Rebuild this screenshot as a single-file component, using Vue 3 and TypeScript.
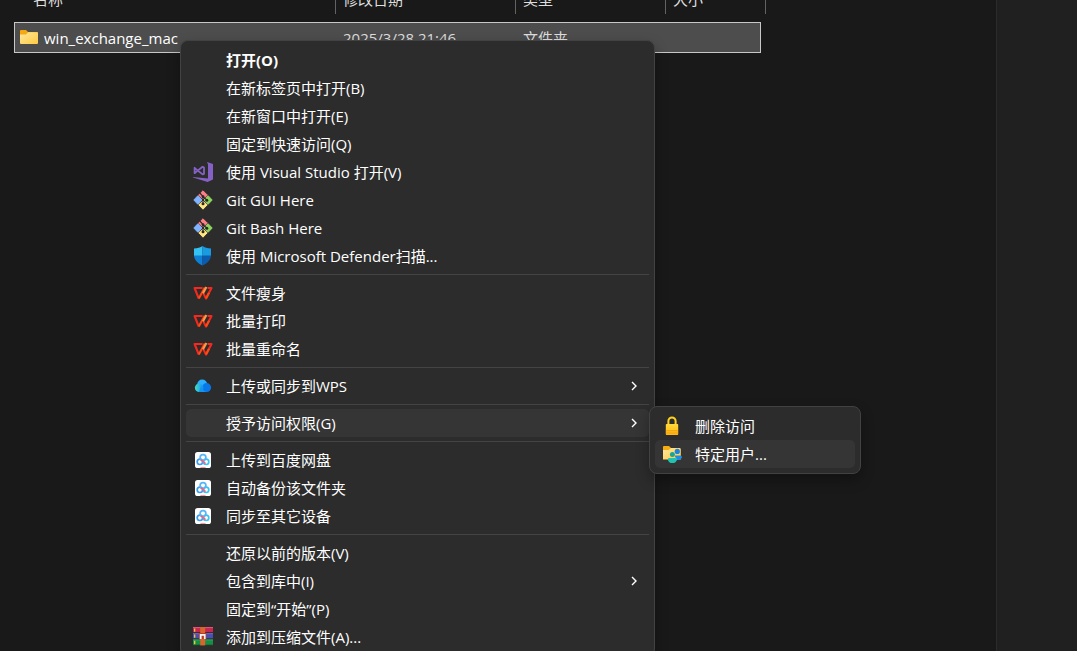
<script setup lang="ts">
import { ref } from 'vue'

type IconName =
  | 'vs' | 'git' | 'shield' | 'wps' | 'cloud' | 'baidu' | 'rar' | 'lock' | 'share'

interface MenuItem {
  label: string
  icon?: IconName
  bold?: boolean
  arrow?: boolean
  children?: MenuItem[]
}

const columns: string[] = ['名称', '修改日期', '类型', '大小']

const groups: MenuItem[][] = [
  [
    { label: '打开(O)', bold: true },
    { label: '在新标签页中打开(B)' },
    { label: '在新窗口中打开(E)' },
    { label: '固定到快速访问(Q)' },
    { label: '使用 Visual Studio 打开(V)', icon: 'vs' },
    { label: 'Git GUI Here', icon: 'git' },
    { label: 'Git Bash Here', icon: 'git' },
    { label: '使用 Microsoft Defender扫描...', icon: 'shield' },
  ],
  [
    { label: '文件瘦身', icon: 'wps' },
    { label: '批量打印', icon: 'wps' },
    { label: '批量重命名', icon: 'wps' },
  ],
  [{ label: '上传或同步到WPS', icon: 'cloud', arrow: true }],
  [
    {
      label: '授予访问权限(G)',
      arrow: true,
      children: [
        { label: '删除访问', icon: 'lock' },
        { label: '特定用户...', icon: 'share' },
      ],
    },
  ],
  [
    { label: '上传到百度网盘', icon: 'baidu' },
    { label: '自动备份该文件夹', icon: 'baidu' },
    { label: '同步至其它设备', icon: 'baidu' },
  ],
  [
    { label: '还原以前的版本(V)' },
    { label: '包含到库中(I)', arrow: true },
    { label: '固定到“开始”(P)' },
    { label: '添加到压缩文件(A)...', icon: 'rar' },
  ],
]

const openLabel = ref('授予访问权限(G)')
const activeChild = ref('特定用户...')
</script>

<template>
  <div class="explorer">
    <svg class="defs" aria-hidden="true">
      <defs>
        <linearGradient id="folderFill" x1="0" y1="0" x2="1" y2="1">
          <stop offset="0" stop-color="#ffe8a0" />
          <stop offset="1" stop-color="#ffca3e" />
        </linearGradient>
        <linearGradient id="cloudFill" x1="0" y1="0" x2="1" y2="0">
          <stop offset="0" stop-color="#3fe0c5" />
          <stop offset="1" stop-color="#1490f5" />
        </linearGradient>
        <linearGradient id="lockFill" x1="0" y1="0" x2="0" y2="1">
          <stop offset="0" stop-color="#ffd83a" />
          <stop offset="1" stop-color="#ffb80f" />
        </linearGradient>
      </defs>
      <symbol id="icon-vs" viewBox="0 0 20 20">
        <path fill="#8661c5" d="M14 0 20 2V17.4L14.6 20 0 15.4V15L15 16.6V2.6Z" />
        <path fill="none" stroke="#8661c5" stroke-width="1.8" stroke-linejoin="round" d="M1.6 5.8V11.2L4.4 8.9 9.6 4.8 11 5.6V11.8L9.6 12.4 4.4 8.3Z" />
      </symbol>
      <symbol id="icon-git" viewBox="0 0 20 20">
        <g stroke-width="1" stroke-linejoin="round">
          <path fill="#ff7f86" stroke="#ff7f86" d="M10 .8 14.4 5.2 10 9 5.6 5.2Z" />
          <path fill="#80b3ff" stroke="#80b3ff" d="M4.8 5.8 9 10 4.8 14.2.8 10Z" />
          <path fill="#8fd35f" stroke="#8fd35f" d="M15.2 5.8 19.2 10 15.2 14.2 11 10Z" />
          <path fill="#ffe680" stroke="#ffe680" d="M10 11 14.2 14.8 10 19.2 5.8 14.8Z" />
        </g>
        <path stroke="#282828" stroke-width="1.1" fill="none" d="M6.8 3 10 6.4V14M10.3 6.8 13.8 10.2" />
        <circle cx="10" cy="6.6" r="1.4" fill="#282828" />
        <circle cx="10" cy="13.8" r="1.5" fill="#282828" />
        <circle cx="13.8" cy="10.2" r="1.5" fill="#282828" />
      </symbol>
      <symbol id="icon-shield" viewBox="0 0 20 20">
        <path fill="#35c1f1" d="M9.5 0C7.5 1.6 4.5 2.4 1 2.4V10H9.5Z" />
        <path fill="#199be2" d="M9.5 0C11.5 1.6 14.5 2.4 18 2.4V10H9.5Z" />
        <path fill="#0f7fd6" d="M1 9.4H9.5V19.4C5 17.4 1.3 14 1 9.4Z" />
        <path fill="#0b5cae" d="M18 9.4H9.5V19.4C14 17.4 17.7 14 18 9.4Z" />
      </symbol>
      <symbol id="icon-wps" viewBox="0 0 20 20">
        <g fill="none" stroke-width="2.1" stroke-linejoin="round">
          <path stroke="#f5281f" d="M9.6 5H1.6L5.8 15.6" />
          <path stroke="#ff4a14" d="M5.8 15.6 11.8 4.6" />
          <path stroke="#f5281f" d="M14.6 5H18.5L13 15.6 10 9.6" />
          <path stroke="#ff4a14" d="M13 15.6 16 9.8" />
          <path stroke="#ff9a4a" d="M13.4 4 10 10.2" />
        </g>
      </symbol>
      <symbol id="icon-cloud" viewBox="0 0 20 20">
        <circle cx="9.2" cy="8.6" r="5" fill="#2bb0ff" />
        <circle cx="13.6" cy="11.6" r="4.5" fill="#0878e8" />
        <path d="M9 16H14L10 11Z" fill="#0878e8" />
        <circle cx="6.2" cy="11.8" r="4.3" fill="url(#cloudFill)" />
        <path d="M6 16.1H14C11 15.8 9.8 13 8 10Z" fill="#1592f2" />
      </symbol>
      <symbol id="icon-baidu" viewBox="0 0 20 20">
        <rect x="2" y="2" width="16" height="16" rx="2.6" fill="#fff" />
        <g fill="none" stroke-width="1.7">
          <circle cx="6.9" cy="11.8" r="2.7" stroke="#3a9df2" />
          <circle cx="13.1" cy="11.8" r="2.7" stroke="#35c5f7" />
          <circle cx="10" cy="7.6" r="2.9" stroke="#58b6f8" />
          <path d="M7.8 10 10 11.2 12.4 13.6" stroke="#f2647c" />
        </g>
        <path d="M7.4 17.4H12.6" stroke="#f58b98" stroke-width="1" />
      </symbol>
      <symbol id="icon-rar" viewBox="0 0 20 20">
        <rect y="0" width="20" height="5.6" fill="#c7264f" />
        <rect y="6" width="20" height="5.8" fill="#4a4fb0" />
        <rect y="12.2" width="20" height="6.2" fill="#159042" />
        <path stroke="#ef7d9b" stroke-width=".6" d="M0 .6H20" />
        <path stroke="#8d92e0" stroke-width=".6" d="M0 6.6H20" />
        <path stroke="#60c884" stroke-width=".6" d="M0 12.8H20" />
        <path stroke="#222" stroke-width=".7" d="M0 5.7H20M0 11.9H20M0 18.2H20" />
        <path stroke="#ffcf3e" stroke-width="1.2" d="M1.7 1.5V4.8M1.7 7.5V10.8M1.7 13.8V17.3" />
        <rect x="7.2" width="5" height="18.4" fill="#d8652d" />
        <rect x="6" y="6" width="7.4" height="6" fill="#b83c28" />
        <path d="M6.8 12V7H12.6V12H10.9V8.8H8.6V12Z" fill="#f5f5f5" />
      </symbol>
      <symbol id="icon-lock" viewBox="0 0 20 20">
        <path d="M6.4 9V5A3.6 3.6 0 0 1 13.6 5V9" fill="none" stroke="#ffd21e" stroke-width="2" />
        <rect x="3.8" y="8" width="12.4" height="11" rx=".8" fill="url(#lockFill)" />
        <path d="M3.8 14.8H16.2M3.8 17H16.2" stroke="#f39c0c" stroke-width="1" />
      </symbol>
      <symbol id="icon-share" viewBox="0 0 20 20">
        <path fill="#f6ad12" d="M1 3Q1 2 2 2H7L9 4H17Q18 4 18 5V7H1Z" />
        <path fill="url(#folderFill)" d="M1 6H6.5L9 4H17Q18.8 4 18.8 5V15.6H1Z" />
        <circle cx="15.3" cy="7.4" r="2.6" fill="#1b83e2" />
        <path fill="#198de8" d="M12.4 11.6H18Q20 11.6 20 13.2 19 16 15 16Z" />
        <circle cx="10.4" cy="10.5" r="2.5" fill="#1ba596" />
        <path fill="#22c2b0" d="M7.5 14H13.4Q15.2 14 15.2 15.4 14 19 10.4 19 6.5 19 5.8 15.4 5.8 14 7.5 14Z" />
      </symbol>
    </svg>

    <main class="files">
      <table class="list">
        <colgroup>
          <col class="col-name" />
          <col class="col-date" />
          <col class="col-type" />
          <col class="col-size" />
        </colgroup>
        <thead>
          <tr>
            <th v-for="column in columns" :key="column" scope="col">
              <div class="heading">{{ column }}</div>
            </th>
          </tr>
        </thead>
        <tbody>
          <tr class="row">
            <td class="name-cell">
              <div class="name">
                <svg class="folder" viewBox="0 0 18 15" aria-hidden="true">
                  <path fill="#f5a80f" d="M0 1Q0 0 1 0H6L8 2H17Q18 2 18 3V6H0Z" />
                  <path fill="url(#folderFill)" d="M0 4.6H6L8 2.2H17Q18 2.2 18 3V13Q18 14 17 14H1Q0 14 0 13Z" />
                </svg>
                <span>win_exchange_mac</span>
              </div>
            </td>
            <td>2025/3/28 21:46</td>
            <td>文件夹</td>
            <td></td>
          </tr>
        </tbody>
      </table>
    </main>
    <aside class="preview"></aside>

    <div class="menu" role="menu">
      <div v-for="(group, g) in groups" :key="g" class="group" role="group">
        <div v-for="item in group" :key="item.label" class="entry">
          <button
            type="button"
            role="menuitem"
            class="item"
            :class="{ bold: item.bold, active: item.children && openLabel === item.label }"
          >
            <svg class="icon" aria-hidden="true"><use v-if="item.icon" :href="'#icon-' + item.icon" /></svg>
            <span class="label">{{ item.label }}</span>
            <svg v-if="item.arrow" class="chevron" viewBox="0 0 6 10" aria-hidden="true">
              <path d="M1 1 5 5 1 9" />
            </svg>
          </button>
          <div v-if="item.children && openLabel === item.label" class="submenu" role="menu">
            <button
              v-for="child in item.children"
              :key="child.label"
              type="button"
              role="menuitem"
              class="item"
              :class="{ active: activeChild === child.label }"
              @mouseenter="activeChild = child.label"
            >
              <svg class="icon" aria-hidden="true"><use :href="'#icon-' + child.icon" /></svg>
              <span class="label">{{ child.label }}</span>
            </button>
          </div>
        </div>
      </div>
    </div>
  </div>
</template>

<style>
body {
  margin: 0;
  background: #191919;
}
</style>

<style scoped>
.explorer {
  position: relative;
  display: flex;
  height: 100vh;
  overflow: hidden;
  background: #191919;
  color: #fff;
  font-family: 'Open Sans', 'Noto Sans CJK SC', sans-serif;
  font-size: 15px;
  line-height: 20px;
}
.defs {
  position: absolute;
  width: 0;
  height: 0;
}
.files {
  flex: 1;
  min-width: 0;
}
.preview {
  width: 80px;
  border-left: 1px solid #2b2b2b;
  background: #202020;
}
.list {
  width: 752px;
  margin: -15px 0 0 14px;
  table-layout: fixed;
  border-spacing: 0;
}
.col-name { width: 322px; }
.col-date { width: 180px; }
.col-type { width: 150px; }
.col-size { width: 100px; }
th {
  padding: 0 0 8px;
  font-weight: 400;
  text-align: left;
  color: #dedede;
}
.heading {
  height: 29px;
  padding-left: 7px;
  border-right: 1px solid #636363;
  line-height: 28px;
}
th:first-child .heading {
  padding-left: 19px;
}
.row {
  position: relative;
  height: 31px;
  background: linear-gradient(#4d4d4d, #4d4d4d) no-repeat 0 0 / calc(100% - 5px) 100%;
}
.row::after {
  content: '';
  position: absolute;
  inset: 0 5px 0 0;
  border: 1px solid #c8c8c8;
}
td {
  padding: 0 0 0 7px;
  color: #dedede;
}
.name-cell {
  padding-left: 6px;
  color: #fff;
}
.name {
  display: flex;
  align-items: center;
  gap: 6px;
}
.folder {
  width: 18px;
  height: 15px;
}
.menu {
  position: absolute;
  top: 40px;
  left: 180px;
  box-sizing: border-box;
  width: 475px;
  padding: 5px;
  border: 1px solid #424242;
  border-radius: 8px;
  background: #2c2c2c;
  box-shadow: 0 6px 14px rgba(0, 0, 0, 0.3);
}
.group + .group {
  margin-top: 4px;
  padding-top: 4px;
  border-top: 1px solid #444;
}
.entry {
  position: relative;
}
.item {
  display: flex;
  align-items: center;
  gap: 13px;
  width: 100%;
  height: 28px;
  padding: 0 12px 0 7px;
  border: 0;
  border-radius: 5px;
  background: none;
  color: #fff;
  font: inherit;
  text-align: left;
}
.item.active {
  background: #353535;
}
.item.bold {
  font-weight: 700;
}
.icon {
  flex: none;
  width: 20px;
  height: 20px;
}
.label {
  flex: 1;
  white-space: nowrap;
}
.chevron {
  width: 6px;
  height: 10px;
  fill: none;
  stroke: #fff;
  stroke-width: 1.4;
}
.submenu {
  position: absolute;
  z-index: 1;
  top: -3px;
  left: 100%;
  box-sizing: border-box;
  width: 212px;
  padding: 5px;
  border: 1px solid #424242;
  border-radius: 8px;
  background: #2c2c2c;
  box-shadow: 0 6px 14px rgba(0, 0, 0, 0.3);
}
</style>
